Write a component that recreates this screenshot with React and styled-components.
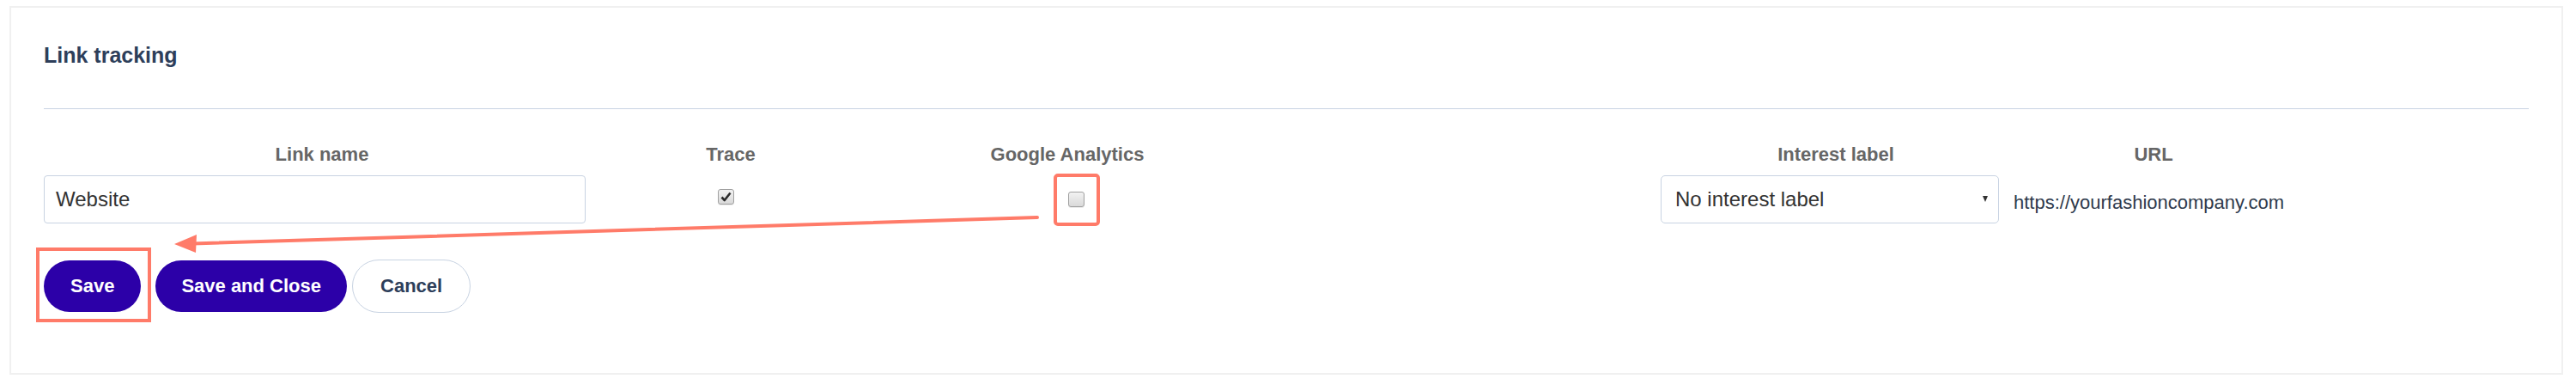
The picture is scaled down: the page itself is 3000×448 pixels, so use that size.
import React from "react";
import styled, { createGlobalStyle } from "styled-components";

const Global = createGlobalStyle`
  html, body { margin: 0; padding: 0; background: #ffffff; }
  body { font-family: "Liberation Sans", Arial, sans-serif; }
`;

const Page = styled.div`
  position: relative;
  width: 3000px;
  height: 448px;
  padding: 7px 0 0 11px;
  box-sizing: border-box;
`;

const Panel = styled.section`
  width: 2974px;
  height: 429px;
  box-sizing: border-box;
  border: 2px solid #f0f0f0;
  padding: 41px 38px 0 38px;
  display: flex;
  flex-direction: column;
`;

const Title = styled.h2`
  margin: 0;
  font-size: 25px;
  line-height: 28px;
  font-weight: 700;
  color: #2d3e5a;
`;

const Divider = styled.hr`
  margin: 48px 0 0 0;
  border: 0;
  height: 1px;
  background: #c9d3e3;
`;

const Table = styled.div`
  margin-top: 41px;
  display: grid;
  grid-template-columns: 648px 304px 480px 451px 408px 332px 1fr;
  grid-template-rows: 24px 56px;
  row-gap: 12px;
`;

const Head = styled.div`
  font-size: 22px;
  line-height: 24px;
  font-weight: 700;
  color: #666666;
  text-align: center;
  white-space: nowrap;
`;

const Cell = styled.div`
  display: flex;
  align-items: center;
  justify-content: ${(p) => p.$justify || "flex-start"};
`;

const Field = styled.div`
  width: 631px;
  height: 56px;
  box-sizing: border-box;
  border: 1px solid #c8d3e2;
  border-radius: 4px;
  padding: 0 13px;
  display: flex;
  align-items: center;
  font-size: 24px;
  color: #333333;
`;

const Select = styled.div`
  width: 394px;
  height: 56px;
  box-sizing: border-box;
  border: 1px solid #c8d3e2;
  border-radius: 5px;
  padding: 0 12px 0 16px;
  display: flex;
  align-items: center;
  justify-content: space-between;
  font-size: 24px;
  color: #333333;
`;

const Caret = styled.span`
  width: 0;
  height: 0;
  border-left: 3.5px solid transparent;
  border-right: 3.5px solid transparent;
  border-top: 7px solid #333333;
  margin-top: -2px;
`;

const Check = styled.span`
  width: 19px;
  height: 18px;
  box-sizing: border-box;
  border: 1px solid #a0a0a0;
  border-radius: 3px;
  background: linear-gradient(#f2f2f2, #d9d9d9);
  box-shadow: 0 1px 0 rgba(0, 0, 0, 0.08);
  display: flex;
  align-items: center;
  justify-content: center;
  margin-left: ${(p) => p.$shift || 0}px;
  margin-top: ${(p) => p.$drop || 0}px;
`;

const Url = styled.div`
  padding-left: 3px;
  font-size: 22px;
  color: #2f3a4c;
  white-space: nowrap;
  margin-top: 8px;
`;

const Actions = styled.div`
  margin-top: 42px;
  display: flex;
  align-items: center;
  height: 62px;
`;

const Button = styled.button`
  height: ${(p) => (p.$ghost ? 62 : 60)}px;
  box-sizing: border-box;
  padding: 0 ${(p) => p.$pad || 32}px;
  margin: 0 0 0 ${(p) => p.$gap || 0}px;
  border-radius: 31px;
  border: ${(p) => (p.$ghost ? "1px solid #c8d3e2" : "0")};
  background: ${(p) => (p.$ghost ? "#ffffff" : "#2c00a8")};
  color: ${(p) => (p.$ghost ? "#2d3e5a" : "#ffffff")};
  font-family: "Liberation Sans", Arial, sans-serif;
  font-size: 22px;
  font-weight: 700;
  cursor: pointer;
`;

const Overlay = styled.svg`
  position: absolute;
  left: 0;
  top: 0;
  pointer-events: none;
`;

export default function App() {
  return (
    <>
      <Global />
      <Page>
        <Panel>
          <Title>Link tracking</Title>
          <Divider />
          <Table>
            <Head>Link name</Head>
            <Head>Trace</Head>
            <Head>Google Analytics</Head>
            <Head />
            <Head>Interest label</Head>
            <Head>URL</Head>
            <Head />

            <Cell>
              <Field>Website</Field>
            </Cell>
            <Cell $justify="center">
              <Check $shift={-12} $drop={-6}>
                <svg width="13" height="12" viewBox="0 0 13 12">
                  <path
                    d="M1.5 6.5 L4.8 10 L11.5 1.5"
                    fill="none"
                    stroke="#2b2b2b"
                    strokeWidth="2.6"
                    strokeLinejoin="round"
                  />
                </svg>
              </Check>
            </Cell>
            <Cell $justify="center">
              <Check $shift={20} $drop={-1} />
            </Cell>
            <Cell />
            <Cell>
              <Select>
                <span>No interest label</span>
                <Caret />
              </Select>
            </Cell>
            <Cell>
              <Url>https://yourfashioncompany.com</Url>
            </Cell>
            <Cell />
          </Table>
          <Actions>
            <Button $pad={31}>Save</Button>
            <Button $gap={17} $pad={30}>Save and Close</Button>
            <Button $ghost $gap={6} $pad={32}>Cancel</Button>
          </Actions>
        </Panel>
        <Overlay width="3000" height="448" viewBox="0 0 3000 448">
          <rect x="44" y="290" width="130" height="83" fill="none" stroke="#ff7b69" strokeWidth="4" />
          <rect x="1229" y="204" width="50" height="57" rx="3" fill="none" stroke="#ff7b69" strokeWidth="4" />
          <line x1="1208" y1="253" x2="224" y2="283.5" stroke="#ff7b69" strokeWidth="4" strokeLinecap="round" />
          <polygon points="203,284 229,273 228,294" fill="#ff7b69" />
        </Overlay>
      </Page>
    </>
  );
}
